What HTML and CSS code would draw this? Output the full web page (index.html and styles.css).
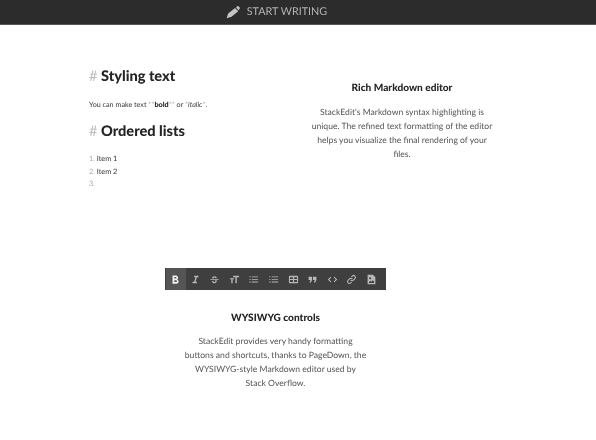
FILE: index.html
```html
<!DOCTYPE html>
<html lang="en">
<head>
<meta charset="utf-8">
<title>StackEdit</title>
<link rel="stylesheet" href="styles.css">
</head>
<body>
<header class="topbar">
  <a class="start" href="#">
    <svg class="pencil" viewBox="0 0 24 24" aria-hidden="true"><path d="M17 3.800 19 2.400c1.200-.8 2.500-.6 3.300.4l.9 1.100c.8 1.100.7 2.400-.3 3.300l-1.700 1.600L17 3.800zM15.500 5l5.500 5.500L9.500 20 1 22.500 3.700 14.500 15.500 5z"/></svg>
    <span>START WRITING</span>
  </a>
</header>
<main class="page">
  <section class="feature-row">
    <div class="editor">
      <h2 class="md-h"><span class="hash">#</span> Styling text</h2>
      <p class="md-p">You can make text <span class="mark">**</span><b>bold</b><span class="mark">**</span> or <span class="mark">*</span><i>italic</i><span class="mark">*</span>.</p>
      <h2 class="md-h"><span class="hash">#</span> Ordered lists</h2>
      <ol class="md-list">
        <li><span class="mark">1.</span> Item 1</li>
        <li><span class="mark">2.</span> Item 2</li>
        <li><span class="mark">3.</span></li>
      </ol>
    </div>
    <div class="blurb blurb-side">
      <h3>Rich Markdown editor</h3>
      <p>StackEdit's Markdown syntax highlighting is unique. The refined text formatting of the editor helps you visualize the final rendering of your files.</p>
    </div>
  </section>
  <section class="controls">
    <div class="toolbar">
      <span class="tool active"><svg viewBox="0 0 24 24"><path d="M15.600 11.200c1.300-.8 2.100-2 2.100-3.400C17.700 5.200 15.600 3 13 3H5.500v18H14c2.700 0 4.800-2.200 4.800-4.800 0-2.200-1.300-4.100-3.200-5zM9.500 6.500h3a1.800 1.800 0 0 1 0 3.500h-3V6.500zm3.800 11H9.500v-4h3.800a2 2 0 0 1 0 4z"/></svg></span>
      <span class="tool"><svg viewBox="0 0 24 24"><path d="M9 4v3h3l-3 10H5.500v3H15v-3h-3l3-10h3.500V4z"/></svg></span>
      <span class="tool"><svg viewBox="0 0 24 24"><path d="M6.800 9.500c0-.5.100-.9.300-1.300.5-1.100 2-3.200 4.900-3.200 3 0 4.800 1.800 5.200 4.500h-2.800c-.2-1.300-1-2-2.400-2-1.300 0-2.100.8-2.100 1.600 0 .3.100.5.300.8H6.900c-.1-.2-.1-.4-.1-.4zM21 11v1.800H3V11h18zm-9.300 2.800h5.100c.1.300.2.700.2 1.300 0 2.700-2 4.900-5 4.900-3.300 0-5.300-1.900-5.500-5h2.800c.2 1.700 1.200 2.600 2.700 2.600 1.300 0 2.200-.7 2.200-1.700 0-.8-.6-1.500-2.500-2.100z"/></svg></span>
      <span class="tool"><svg viewBox="0 0 24 24"><path d="M9 4v3h5v13h3V7h5V4H9zM2 11.500h3V20h3v-8.500h3V9H2v2.500z"/></svg></span>
      <span class="tool"><svg viewBox="0 0 24 24"><path d="M3 5.500h3v1.800H3zM8 5.500h14v1.800H8zM3 11h3v1.800H3zM8 11h14v1.800H8zM3 16.500h3v1.800H3zM8 16.500h14v1.800H8z"/></svg></span>
      <span class="tool"><svg viewBox="0 0 24 24"><path d="M2.500 5.500h3v1.800h-3zM8 5.500h14v1.800H8zM2.500 11h3v1.800h-3zM8 11h14v1.800H8zM2.500 16.500h3v1.800h-3zM8 16.500h14v1.800H8z"/></svg></span>
      <span class="tool"><svg viewBox="0 0 24 24"><path fill-rule="evenodd" d="M4 4h16a2 2 0 0 1 2 2v12a2 2 0 0 1-2 2H4a2 2 0 0 1-2-2V6a2 2 0 0 1 2-2zm.300 3v4h6.500V7H4.300zm8.900 0v4h6.500V7h-6.500zm-8.900 6v4.500h6.500V13H4.300zm8.900 0v4.500h6.500V13h-6.500z"/></svg></span>
      <span class="tool"><svg viewBox="0 0 24 24"><path d="M3.500 6h7.500v7l-2.500 5.500h-3L7.500 13h-4zM13 6h7.500v7L18 18.500h-3l2-5.500h-4z"/></svg></span>
      <span class="tool"><svg viewBox="0 0 24 24"><path d="M9.400 16.600 4.800 12l4.600-4.600L7.800 5.800 1.600 12l6.200 6.200 1.600-1.600zm5.200 0 4.600-4.600-4.600-4.600 1.600-1.600 6.200 6.200-6.200 6.200-1.600-1.600z"/></svg></span>
      <span class="tool"><svg viewBox="0 0 24 24"><path fill="none" stroke="currentColor" stroke-width="2.200" stroke-linecap="round" d="M10.500 13.500a4 4 0 0 0 5.700 0l3.300-3.300a4 4 0 0 0-5.700-5.700l-1.300 1.300M13.500 10.500a4 4 0 0 0-5.700 0l-3.300 3.300a4 4 0 0 0 5.700 5.700l1.300-1.300"/></svg></span>
      <span class="tool"><svg viewBox="0 0 24 24"><path fill-rule="evenodd" d="M3.500 1.500H15l5.500 5.500v15.500h-17V1.500zm3 10V19.500h11v-3l-2.500-3-3 3.200-2-2-3.500 3v-6zM9 7a2.200 2.200 0 1 0 0 4.400A2.200 2.200 0 0 0 9 7z"/></svg></span>
    </div>
    <div class="blurb blurb-bottom">
      <h3>WYSIWYG controls</h3>
      <p>StackEdit provides very handy formatting buttons and shortcuts, thanks to PageDown, the WYSIWYG-style Markdown editor used by Stack Overflow.</p>
    </div>
  </section>
</main>
</body>
</html>
```
FILE: styles.css
```css
* { box-sizing: border-box; }
html, body { margin: 0; padding: 0; }
body {
  width: 596px;
  height: 440px;
  overflow: hidden;
  background: #fff;
  color: #2c2c2c;
  font-family: Lato, "Liberation Sans", sans-serif;
  text-rendering: geometricPrecision;
  filter: blur(0.3px);
}
.topbar {
  height: 25px;
  background: #2c2c2c;
  border-bottom: 1px solid #555;
  display: flex;
  justify-content: center;
  padding-right: 43px;
}
.start {
  display: flex;
  align-items: center;
  gap: 7px;
  color: #b4b4b4;
  text-decoration: none;
  font-size: 10.800px;
  line-height: 24px;
}
.pencil { width: 14px; height: 14px; fill: #c4c4c4; }
.feature-row {
  display: flex;
  padding: 43px 0 0 89px;
  height: 243px;
}
.editor { width: 217px; }
.md-h {
  margin: 0;
  font-size: 14.600px;
  line-height: 18px;
  font-weight: 900;
  color: #242424;
}
.hash { color: #bdbdbd; font-weight: 400; }
.md-p {
  margin: 13px 0 13px;
  font-size: 7.200px;
  line-height: 11px;
  color: #3a3a3a;
}
.md-p b { color: #222; font-weight: 900; }
.mark { color: #aaa; }
.md-list {
  list-style: none;
  margin: 12px 0 0;
  padding: 0;
  font-size: 7.300px;
  line-height: 12.500px;
  color: #333;
}
.blurb { text-align: center; }
.blurb h3 {
  margin: 0;
  font-size: 10.100px;
  line-height: 14px;
  font-weight: 900;
  color: #242424;
}
.blurb p {
  margin: 10px 0 0;
  font-size: 8.600px;
  line-height: 14px;
  color: #555;
}
.blurb-side { width: 184px; margin: 13px 0 0 4px; }
.controls { display: flex; flex-direction: column; align-items: center; padding-right: 45px; width: 596px; }
.toolbar {
  display: flex;
  width: 221px;
  height: 22px;
  background: #3f3f3f;
  color: #b8b8b8;
  padding: 0 5px 0 1px;
}
.tool {
  flex: 1;
  display: flex;
  align-items: center;
  justify-content: center;
}
.tool.active { background: #555; color: #f2f2f2; }
.tool svg { width: 11px; height: 11px; fill: currentColor; }
.blurb-bottom { width: 183px; margin-top: 21px; }
.blurb-bottom p { margin-top: 9px; }
```
